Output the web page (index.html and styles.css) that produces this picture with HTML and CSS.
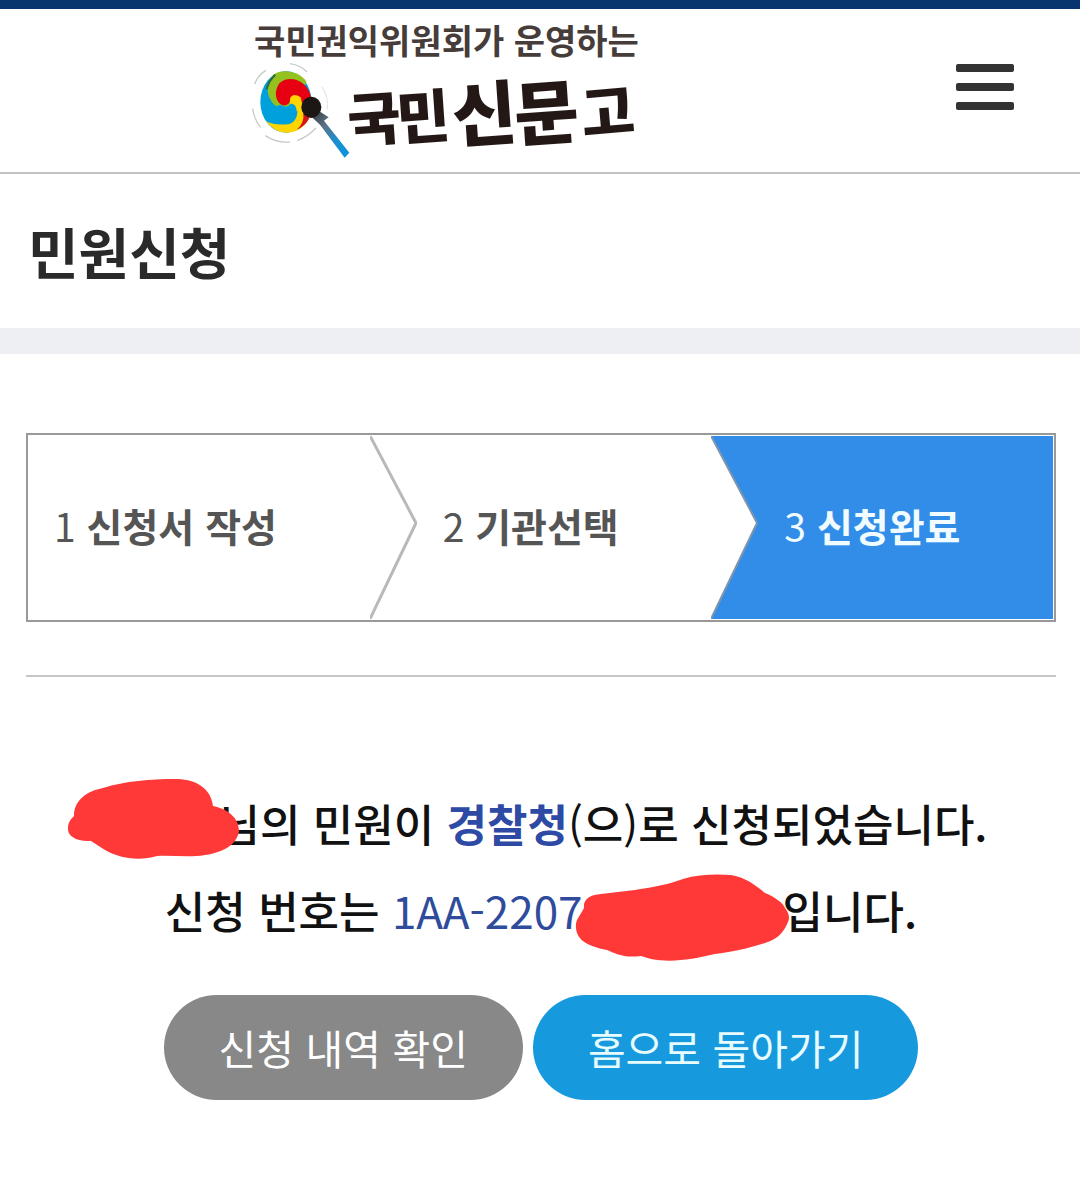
FILE: index.html
```html
<!DOCTYPE html>
<html lang="ko">
<head>
<meta charset="utf-8">
<meta name="viewport" content="width=device-width, initial-scale=1">
<title>국민신문고 - 민원신청</title>
<link rel="stylesheet" href="styles.css">
</head>
<body>
<header class="header">
  <a class="logo" href="#" aria-label="국민신문고">
    <svg class="logo-image" viewBox="-10 -13 410 162" width="410" height="162">
      <text class="logo-tagline" x="4" y="31">국민권익위원회가 운영하는</text>
      <g transform="translate(-10 33) scale(.3333)">
        <g fill="none" stroke="#c9c9c9" stroke-width="4">
          <path d="M44 84Q54 56 78 43M150 23Q182 28 201 48M38 158Q42 190 62 214M76 239Q110 262 150 258M172 254Q206 240 228 216" />
          <path d="M246 92Q266 124 262 160" stroke="#e8e8e8" />
        </g>
        <ellipse cx="138" cy="138" rx="77" ry="92" fill="#00a0dc" />
        <path d="M78 196Q108 210 148 204Q176 194 172 152L216 150C214 196 184 230 138 230Q104 230 78 196Z" fill="#ffd500" />
        <path d="M170 222Q194 200 190 170L215 160Q210 204 170 222Z" fill="#d7141a" />
        <path d="M100 56C128 38 176 44 200 78L150 150Q128 164 108 150C76 124 76 84 100 56Z" fill="#93c120" />
        <path d="M122 146Q140 158 152 144Q164 138 168 152Q164 168 140 170Q122 168 110 150Z" fill="#00a0dc" />
        <path d="M118 82C146 54 206 72 214 128L180 142Q166 112 152 128Q148 150 128 148C104 138 102 104 118 82Z" fill="#e60012" />
        <path d="M150 128Q158 108 182 124L190 160L170 166Q170 144 150 142Z" fill="#ffd500" />
        <path d="M106 56C92 68 84 82 80 100" fill="none" stroke="#286b3a" stroke-width="6" />
        <path d="M208 176L238 166L266 184L252 194L328 290L314 305L240 206Z" fill="url(#handle)" />
        <ellipse cx="214" cy="154" rx="30" ry="32" fill="#1c1614" />
      </g>
      <defs>
        <linearGradient id="handle" x1="0" y1="0" x2="1" y2="1">
          <stop offset="0" stop-color="#333" />
          <stop offset=".35" stop-color="#5d7387" />
          <stop offset=".65" stop-color="#1b8fd0" />
          <stop offset="1" stop-color="#0a95da" />
        </linearGradient>
      </defs>
      <text class="logo-name">
        <tspan class="logo-name-small" x="99 148" y="119 117" rotate="-4">국민</tspan><tspan class="logo-name-large" x="204 266" y="119 118" rotate="-4">신문</tspan><tspan class="logo-name-small" x="333" y="113" rotate="-5">고</tspan>
      </text>
    </svg>
  </a>
  <button class="menu" type="button" aria-label="메뉴">
    <span class="menu-bar"></span>
    <span class="menu-bar"></span>
    <span class="menu-bar"></span>
  </button>
</header>

<h1 class="page-title">민원신청</h1>

<main class="content">
  <ol class="steps">
    <li class="step"><span class="step-label"><span class="latin">1</span> 신청서 작성</span></li>
    <li class="step">
      <svg class="chevron" viewBox="0 0 47 183" preserveAspectRatio="none"><path class="chevron-line" d="M-1 -2L46 87L-1 185" /></svg>
      <span class="step-label"><span class="latin">2</span> 기관선택</span>
    </li>
    <li class="step step-current" aria-current="step">
      <svg class="chevron" viewBox="0 0 47 183" preserveAspectRatio="none"><path class="chevron-fill" d="M-2 -4L46 87L-2 187Z" /></svg>
      <span class="step-label"><span class="latin">3</span> 신청완료</span>
    </li>
  </ol>

  <section class="result">
    <p class="message"><span class="redacted redacted-name"><svg class="scribble scribble-name" viewBox="0 0 174 84"><path d="M7 38C7 22 20 13 36 10C58 3 84 1 108 1C130 1 144 11 146 28C164 32 172 42 172 53C170 66 158 74 138 77C122 80 106 77 90 78C70 84 50 79 38 72L24 63C10 64 0 58 1 50C1 45 3 42 7 38Z" /></svg></span>님의 민원이 <strong class="agency">경찰청</strong><span class="latin">(</span>으<span class="latin">)</span>로 신청되었습니다.</p>
    <p class="message">신청 번호는 <span class="number latin">1AA-2207</span><span class="redacted redacted-number"><svg class="scribble scribble-number" viewBox="0 0 216 90"><path d="M9 34C8 24 16 21 26 20L60 16C80 13 94 10 108 5C124 0 142 0 156 1C172 4 180 11 190 19C200 23 208 29 210 34C214 39 215 44 213 48C208 60 202 65 190 69C172 75 156 78 140 80C118 85 98 89 76 85L66 82C48 84 42 80 32 76C12 72 2 66 1 54C0 46 5 42 9 34Z" /></svg></span>입니다.</p>
    <div class="actions">
      <button class="button button-gray" type="button">신청 내역 확인</button>
      <button class="button button-blue" type="button">홈으로 돌아가기</button>
    </div>
  </section>
</main>
</body>
</html>
```
FILE: styles.css
```css
* {
  box-sizing: border-box;
}

body {
  margin: 0;
  background: #fff;
  color: #111;
  font-family: "Noto Sans CJK KR", sans-serif;
  font-weight: 500;
}

.latin {
  font-weight: 400;
}

/* Header */
.header {
  display: flex;
  align-items: center;
  min-height: 174px;
  border-top: 9px solid #08356e;
  border-bottom: 2px solid #c3c3c3;
}

.logo {
  display: flex;
  flex: 1;
  justify-content: center;
}

.logo-image {
  display: block;
  overflow: visible;
}

.logo-tagline {
  fill: #463c3a;
  font-size: 34px;
  font-weight: 700;
}

.logo-name {
  fill: #231815;
  font-weight: 900;
}

.logo-name-small {
  font-size: 58px;
}

.logo-name-large {
  font-size: 70px;
}

.menu {
  display: flex;
  flex-direction: column;
  gap: 11px;
  padding: 0 66px 8px;
  border: 0;
  background: none;
}

.menu-bar {
  width: 58px;
  height: 8px;
  border-radius: 2px;
  background: #333;
}

/* Page title */
.page-title {
  margin: 0;
  padding: 36px 28px 38px;
  border-bottom: 26px solid #eeeff3;
  color: #2a2a2a;
  font-size: 55px;
  font-weight: 700;
  line-height: 80px;
}

.content {
  padding: 79px 24px 0 26px;
}

/* Application steps */
.steps {
  display: grid;
  grid-template-columns: repeat(3, 1fr);
  margin: 0;
  padding: 1px 1px 1px 0;
  border: 2px solid #999;
  list-style: none;
}

.step {
  display: flex;
  align-items: center;
  min-height: 183px;
  color: #555;
  font-size: 39px;
  font-weight: 700;
}

.step-label {
  padding: 0 0 5px 26px;
}

.step-current {
  background: #328de8;
  color: #f0fcff;
}

.chevron {
  flex: none;
  align-self: stretch;
  width: 47px;
  height: 183px;
}

.chevron-line {
  fill: none;
  stroke: #b9b9b9;
  stroke-width: 3;
}

.chevron-fill {
  fill: #fff;
  stroke: #8095aa;
  stroke-width: 2;
}

/* Result */
.result {
  margin-top: 53px;
  padding: 103px 0 90px;
  border-top: 2px solid #c6c6c6;
  text-align: center;
}

.message {
  margin: 0;
  font-size: 44px;
  line-height: 87px;
}

.agency {
  color: #2d4aa5;
  font-weight: 700;
}

.number {
  color: #2f4c9c;
}

.redacted {
  display: inline-block;
  position: relative;
  height: 45px;
  vertical-align: middle;
}

.redacted-name {
  width: 125px;
}

.redacted-number {
  width: 200px;
}

.scribble {
  position: absolute;
  fill: #ff3838;
}

.scribble-name {
  top: -30px;
  left: -27px;
  width: 174px;
}

.scribble-number {
  top: -21px;
  left: -8px;
  width: 216px;
}

.actions {
  display: flex;
  flex-wrap: wrap;
  justify-content: center;
  gap: 10px;
  margin-top: 41px;
}

.button {
  padding: 0 55px;
  border: 0;
  border-radius: 53px;
  color: #fff;
  font-family: inherit;
  font-size: 41px;
  font-weight: 400;
  line-height: 105px;
}

.button-gray {
  background: #888;
}

.button-blue {
  background: #1799de;
  color: #e6fcff;
}
```
